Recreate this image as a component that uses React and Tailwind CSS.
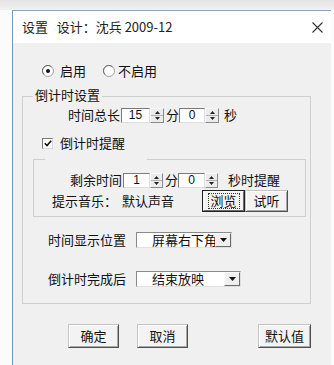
import React from 'react'

function Radio({ checked }) {
  return (
    <svg width="12" height="12" viewBox="0 0 12 12">
      <circle cx="6" cy="6" r="5.5" fill="#fff" stroke="#a0a0a0" />
      <path d="M2 9.5A5 5 0 0 1 9.5 2" fill="none" stroke="#6a6a6a" strokeWidth="1" />
      {checked && <circle cx="6" cy="6" r="2" fill="#111" />}
    </svg>
  )
}

function Check() {
  return (
    <div className="w-[11px] h-[11px] bg-white border border-[#7a7a7a] border-b-[#d8d8d8] border-r-[#d8d8d8] flex items-center justify-center">
      <svg width="8" height="7" viewBox="0 0 8 7">
        <path d="M0.8 3.2L3 5.5L7.2 0.8" fill="none" stroke="#111" strokeWidth="1.6" />
      </svg>
    </div>
  )
}

function Arrow({ up }) {
  return (
    <svg width="5" height="3" viewBox="0 0 5 3">
      <path d={up ? 'M2.5 0L5 3H0z' : 'M0 0H5L2.5 3z'} fill="#222" />
    </svg>
  )
}

function SpinBox({ value, boxW, spinW }) {
  return (
    <div className="flex h-[15px]">
      <div className={`${boxW} h-full bg-white border border-[#7a7a7a] border-b-[#dcdcdc] border-r-[#dcdcdc] flex items-center justify-center text-[12px] leading-none font-['Liberation_Sans',sans-serif]`}>
        {value}
      </div>
      <div className={`${spinW} h-full flex flex-col bg-[#ececec] border border-t-[#f8f8f8] border-l-[#f8f8f8] border-b-[#8a8a8a] border-r-[#8a8a8a]`}>
        <div className="flex-1 flex items-end justify-center pb-[1px]">
          <Arrow up />
        </div>
        <div className="h-px bg-[#b0b0b0]" />
        <div className="flex-1 flex items-start justify-center pt-[1px]">
          <Arrow />
        </div>
      </div>
    </div>
  )
}

// the first combo's text is wider than its field and gets clipped, as in the original
function Combo({ text, w, clip }) {
  return (
    <div className={`${w} h-[16px] flex bg-white border border-[#8a8a8a] border-b-[#e0e0e0] border-r-[#e0e0e0]`}>
      <div className={`flex-1 min-w-0 flex items-center whitespace-nowrap pl-[15px] text-[13px] leading-[14px] ${clip ? 'overflow-x-clip' : ''}`}>{text}</div>
      <div className="w-[16px] h-full flex items-center justify-center bg-[#efefef] border border-t-[#fafafa] border-l-[#fafafa] border-b-[#6a6a6a] border-r-[#6a6a6a]">
        <svg width="7" height="4" viewBox="0 0 7 4">
          <path d="M0 0H7L3.5 4z" fill="#111" />
        </svg>
      </div>
    </div>
  )
}

function Btn({ children, className }) {
  return (
    <div className={`flex items-center justify-center bg-[#f3f3f3] border border-t-[#c4c4c4] border-l-[#c4c4c4] border-b-[#4f4f4f] border-r-[#4f4f4f] shadow-[inset_1px_1px_0_#ffffff,inset_-1px_-1px_0_#a8a8a8] text-[13px] ${className}`}>
      {children}
    </div>
  )
}

export default function App() {
  return (
    <div className="w-[334px] h-[365px] overflow-hidden bg-[#fbfbfb] text-[#111] font-['Noto_Sans_CJK_SC','Noto_Sans',sans-serif] leading-[16px]">
      <div className="h-[10px] bg-gradient-to-b from-[#e4e4e4] to-[#f1f1f1]" />
      <div className="ml-[12px] w-[319px] h-[355px] border-l border-t border-l-[#6f97c9] border-t-[#8ea2b6] flex flex-col">
        {/* title bar */}
        <div className="h-[32px] bg-white flex items-center pl-[9px] pr-[8px]">
          <span className="text-[13px] text-[#222] whitespace-pre">{'设置   设计：沈兵 2009-12'}</span>
          <svg className="ml-auto" width="11" height="11" viewBox="0 0 11 11">
            <path d="M0.5 0.5L10.5 10.5M10.5 0.5L0.5 10.5" stroke="#333" strokeWidth="1.1" />
          </svg>
        </div>

        {/* body */}
        <div className="flex-1 bg-[#f0f0f0] pl-[9px] pt-[20px] text-[13px]">
          <div className="h-[16px] flex items-center ml-[20px]">
            <Radio checked />
            <span className="ml-[6px]">启用</span>
            <span className="ml-[17px] flex"><Radio /></span>
            <span className="ml-[3px]">不启用</span>
          </div>

          <fieldset className="mt-[8px] w-[289px] border border-[#cfcfcf]">
            <legend className="ml-[10px] px-[2px] pb-[4px] text-[13px] leading-[15px]">倒计时设置</legend>

            <div className="mt-[1px] h-[16px] flex items-center pl-[45px]">
              <span>时间总长</span>
              <div className="ml-[1px]">
                <SpinBox value="15" boxW="w-[29px]" spinW="w-[14px]" />
              </div>
              <span className="ml-[2px]">分</span>
              <SpinBox value="0" boxW="w-[26px]" spinW="w-[14px]" />
              <span className="ml-[5px]">秒</span>
            </div>

            <div className="mt-[12px] h-[16px] flex items-center pl-[19px]">
              <Check />
              <span className="ml-[7px]">倒计时提醒</span>
            </div>

            <fieldset className="mt-[8px] ml-[10px] w-[273px] border border-[#cfcfcf]">
              <legend className="ml-[11px] w-[102px] h-[1px] p-0" />
              <div className="mt-[12px] h-[16px] flex items-center pl-[36px]">
                <span>剩余时间</span>
                <div className="ml-[1px]">
                  <SpinBox value="1" boxW="w-[27px]" spinW="w-[13px]" />
                </div>
                <span className="ml-[2px]">分</span>
                <SpinBox value="0" boxW="w-[27px]" spinW="w-[13px]" />
                <span className="ml-[10px]">秒时提醒</span>
              </div>
              <div className="mt-[2px] mb-[4px] h-[22px] flex items-center pl-[18px]">
                <span>提示音乐：</span>
                <span className="ml-[5px]">默认声音</span>
                <div className="ml-[28px] w-[43px] h-[22px] border border-[#222] flex">
                  <Btn className="flex-1 border-t-[#f8f8f8] border-l-[#f8f8f8] border-b-[#6a6a6a] border-r-[#6a6a6a] shadow-none">
                    <span className="px-[2px] outline-1 outline-dotted outline-[#333] leading-[14px]">浏览</span>
                  </Btn>
                </div>
                <Btn className="w-[43px] h-[22px]">试听</Btn>
              </div>
            </fieldset>

            <div className="mt-[15px] h-[16px] flex items-center pl-[25px]">
              <span>时间显示位置</span>
              <div className="ml-[10px]">
                <Combo text="屏幕右下角" w="w-[96px]" clip />
              </div>
            </div>

            <div className="mt-[23px] mb-[16px] h-[16px] flex items-center pl-[25px]">
              <span>倒计时完成后</span>
              <div className="ml-[10px]">
                <Combo text="结束放映" w="w-[105px]" />
              </div>
            </div>
          </fieldset>

          <div className="mt-[20px] flex">
            <Btn className="ml-[46px] w-[51px] h-[24px]">确定</Btn>
            <Btn className="ml-[18px] w-[51px] h-[24px]">取消</Btn>
            <Btn className="ml-[70px] w-[53px] h-[24px]">默认值</Btn>
          </div>
        </div>
      </div>
    </div>
  )
}
